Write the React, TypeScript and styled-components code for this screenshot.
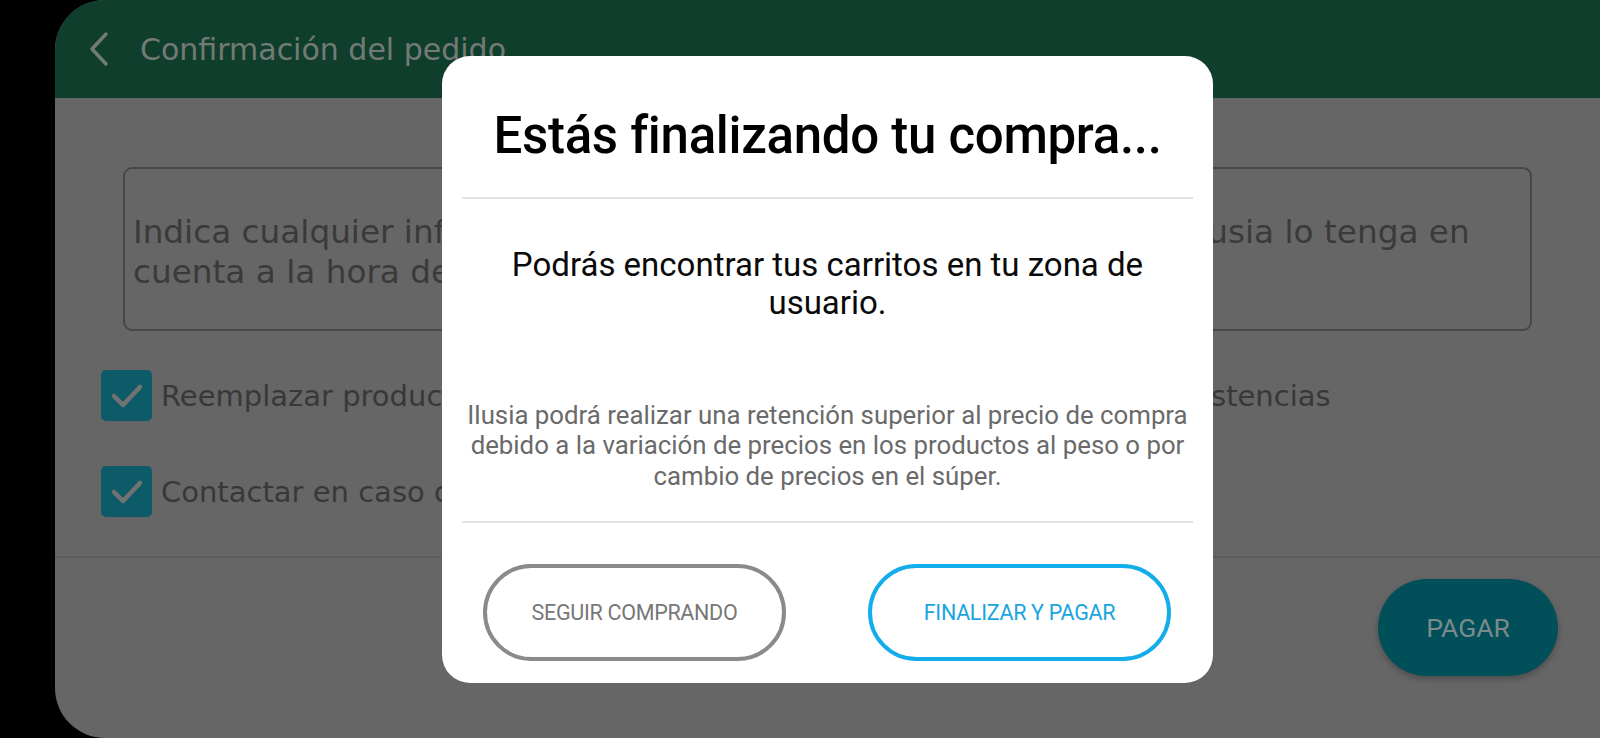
import styled, { createGlobalStyle } from "styled-components";

const GlobalStyle = createGlobalStyle`
  html, body {
    margin: 0;
    padding: 0;
    background: #000;
  }
  * {
    box-sizing: border-box;
  }
`;

const Screen = styled.div`
  position: relative;
  margin-left: 55px;
  height: 738px;
  background: #666666;
  border-radius: 50px 0 0 50px;
  overflow: hidden;
  display: flex;
  flex-direction: column;
  font-family: "DejaVu Sans", sans-serif;
`;

const Header = styled.header`
  height: 98px;
  flex-shrink: 0;
  background: #0f3f2c;
  display: flex;
  align-items: center;
  padding-left: 33px;
  gap: 30px;
`;

const HeaderTitle = styled.h1`
  margin: 0;
  font-size: 30px;
  font-weight: 400;
  color: #737a76;
`;

const Content = styled.main`
  flex: 1;
  display: flex;
  flex-direction: column;
`;

const Notes = styled.div`
  margin: 69px 68px 0 68px;
  height: 164px;
  border: 2px solid #474747;
  border-radius: 9px;
  display: flex;
  align-items: center;
  padding: 5px 8px 0;
  font-size: 32.7px;
  line-height: 40px;
  color: #3a3a3a;
  white-space: nowrap;
  overflow: hidden;
`;

const Options = styled.div`
  margin: 39px 0 0 46px;
  display: flex;
  flex-direction: column;
  gap: 45px;
`;

const OptionRow = styled.label`
  display: flex;
  align-items: center;
  gap: 9px;
  font-size: 29px;
  color: #383838;
  white-space: nowrap;
`;

const CheckBox = styled.span`
  width: 51px;
  height: 51px;
  flex-shrink: 0;
  border-radius: 5px;
  background: #0d5a68;
  display: flex;
  align-items: center;
  justify-content: center;
`;

const Footer = styled.div`
  margin-top: 39px;
  border-top: 2px solid #5d5d5d;
  flex: 1;
  display: flex;
  justify-content: flex-end;
  align-items: flex-start;
  padding: 21px 42px 0 0;
`;

const PayButton = styled.button`
  width: 180px;
  height: 97px;
  border: none;
  border-radius: 49px;
  background: #004f59;
  color: #7d8a8b;
  font-family: "Roboto", sans-serif;
  font-size: 26.5px;
  box-shadow: 0 3px 6px rgba(0, 0, 0, 0.25);
`;

const Overlay = styled.div`
  position: absolute;
  inset: 0;
  display: flex;
  align-items: center;
  justify-content: center;
`;

const Dialog = styled.div`
  width: 771px;
  height: 627px;
  background: #fff;
  border-radius: 28px;
  padding: 0 20px;
  display: flex;
  flex-direction: column;
  font-family: "Roboto", sans-serif;
  text-align: center;
`;

const DialogTitle = styled.h2`
  margin: 0;
  height: 141px;
  display: flex;
  align-items: center;
  justify-content: center;
  padding-top: 18px;
  font-size: 51px;
  font-weight: 500;
  letter-spacing: -0.3px;
  color: #000;
`;

const Divider = styled.hr`
  margin: 0;
  border: none;
  border-top: 2px solid #e2e2e2;
`;

const Lead = styled.p`
  margin: 47px 0 0;
  font-size: 33px;
  line-height: 38px;
  color: #0a0a0a;
  white-space: nowrap;
`;

const FinePrint = styled.p`
  margin: 78px 0 30px;
  font-size: 25.8px;
  line-height: 30.5px;
  color: #6a6a6a;
  white-space: nowrap;
`;

const Actions = styled.div`
  flex: 1;
  display: flex;
  justify-content: space-between;
  align-items: flex-start;
  padding: 41px 22px 0 21px;
`;

const OutlineButton = styled.button<{ $tone: "grey" | "blue" }>`
  width: 303px;
  height: 97px;
  border-radius: 49px;
  background: #fff;
  border: 4px solid ${(p) => (p.$tone === "blue" ? "#13aeea" : "#8a8a8a")};
  color: ${(p) => (p.$tone === "blue" ? "#1aa5e0" : "#777")};
  font-family: "Roboto", sans-serif;
  font-size: 21.5px;
  letter-spacing: -0.3px;
`;

const Check = () => (
  <svg width="34" height="28" viewBox="0 0 34 28">
    <path d="M4 14 L13 23 L30 5" fill="none" stroke="#727272" strokeWidth="4.5" strokeLinecap="round" strokeLinejoin="round" />
  </svg>
);

export default function App() {
  return (
    <>
      <GlobalStyle />
      <Screen>
        <Header>
          <svg width="22" height="36" viewBox="0 0 22 36">
            <path d="M18 3 L4 18 L18 33" fill="none" stroke="#737a76" strokeWidth="3.5" strokeLinecap="round" strokeLinejoin="round" />
          </svg>
          <HeaderTitle>Confirmación del pedido</HeaderTitle>
        </Header>
        <Content>
          <Notes>
            Indica cualquier información adicional sobre tu pedido para que Ilusia lo tenga en
            <br />
            cuenta a la hora de preparar tu compra.
          </Notes>
          <Options>
            <OptionRow>
              <CheckBox><Check /></CheckBox>
              Reemplazar productos por otros semejantes en caso de que no haya existencias
            </OptionRow>
            <OptionRow>
              <CheckBox><Check /></CheckBox>
              Contactar en caso de incidencias
            </OptionRow>
          </Options>
          <Footer>
            <PayButton>PAGAR</PayButton>
          </Footer>
        </Content>
        <Overlay>
          <Dialog>
            <DialogTitle>Estás finalizando tu compra...</DialogTitle>
            <Divider />
            <Lead>
              Podrás encontrar tus carritos en tu zona de
              <br />
              usuario.
            </Lead>
            <FinePrint>
              Ilusia podrá realizar una retención superior al precio de compra
              <br />
              debido a la variación de precios en los productos al peso o por
              <br />
              cambio de precios en el súper.
            </FinePrint>
            <Divider />
            <Actions>
              <OutlineButton $tone="grey">SEGUIR COMPRANDO</OutlineButton>
              <OutlineButton $tone="blue">FINALIZAR Y PAGAR</OutlineButton>
            </Actions>
          </Dialog>
        </Overlay>
      </Screen>
    </>
  );
}
